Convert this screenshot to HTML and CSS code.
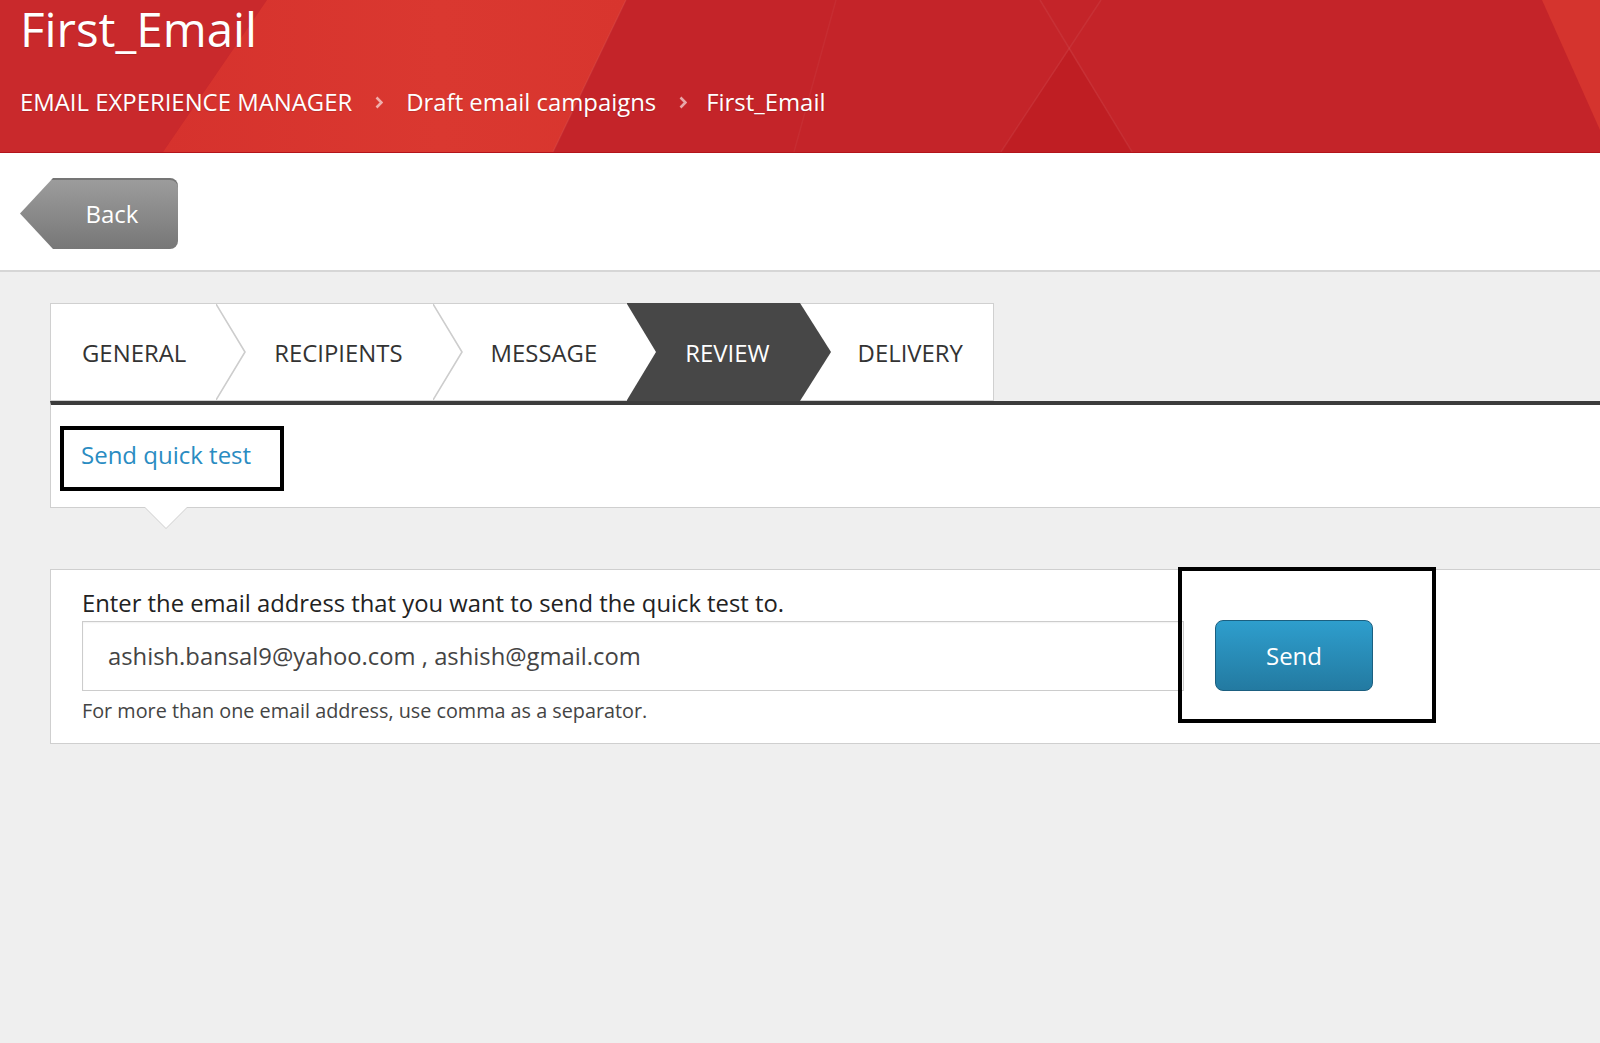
FILE: index.html
```html
<!DOCTYPE html>
<html lang="en">
<head>
  <meta charset="UTF-8" />
  <meta name="viewport" content="width=device-width, initial-scale=1.0"/>
  <title>First_Email</title>
  <link rel="stylesheet" href="styles.css">
</head>
<body>
  <header class="masthead">
    <svg class="masthead-bg" viewBox="0 0 1600 152" preserveAspectRatio="none" aria-hidden="true">
      <defs>
        <linearGradient id="band" x1="0" y1="0" x2="1" y2="0">
          <stop offset="0" stop-color="#d6322d"/>
          <stop offset="0.6" stop-color="#da3830"/>
          <stop offset="1" stop-color="#d8352e"/>
        </linearGradient>
      </defs>
      <rect width="1600" height="152" fill="#c42429"/>
      <polygon points="0,0 267,0 163,152 0,152" fill="#c9292c"/>
      <polygon points="267,0 626,0 553,152 163,152" fill="url(#band)"/>
      <polygon points="1069,50 1001,152 1132,152" fill="#bf1e23"/>
      <polygon points="1542,0 1600,0 1600,130" fill="#d5342e"/>
      <line x1="1040" y1="0" x2="1132" y2="152" stroke="#fff" stroke-opacity=".06" stroke-width="1.5"/>
      <line x1="1101" y1="0" x2="1001" y2="152" stroke="#fff" stroke-opacity=".06" stroke-width="1.5"/>
      <line x1="836" y1="0" x2="794" y2="152" stroke="#fff" stroke-opacity=".04" stroke-width="1.5"/>
      <line x1="626" y1="0" x2="553" y2="152" stroke="#fff" stroke-opacity=".06" stroke-width="1.5"/>
    </svg>
    <h1 class="title">First_Email</h1>
    <nav class="crumbs">
      <span>EMAIL EXPERIENCE MANAGER</span>
      <svg class="crumb-sep" viewBox="0 0 8 13" aria-hidden="true"><polyline points="1.5,1.5 6.5,6.5 1.5,11.5" fill="none" stroke="currentColor" stroke-width="2.6"/></svg>
      <span>Draft email campaigns</span>
      <svg class="crumb-sep" viewBox="0 0 8 13" aria-hidden="true"><polyline points="1.5,1.5 6.5,6.5 1.5,11.5" fill="none" stroke="currentColor" stroke-width="2.6"/></svg>
      <span class="crumb-last">First_Email</span>
    </nav>
  </header>

  <div class="toolbar">
    <button class="back-btn" type="button">Back</button>
  </div>

  <main class="workspace">
    <div class="steps">
      <div class="step">GENERAL
        <svg class="step-edge" viewBox="0 0 30 96" preserveAspectRatio="none" aria-hidden="true">
          <polygon points="0,0 29,48 0,96" fill="#fff"/>
          <polyline points="0,0 29,48 0,96" fill="none" stroke="#cdcdcd" stroke-width="1.6"/>
        </svg>
      </div>
      <div class="step">RECIPIENTS
        <svg class="step-edge" viewBox="0 0 30 96" preserveAspectRatio="none" aria-hidden="true">
          <polygon points="0,0 29,48 0,96" fill="#fff"/>
          <polyline points="0,0 29,48 0,96" fill="none" stroke="#cdcdcd" stroke-width="1.6"/>
        </svg>
      </div>
      <div class="step">MESSAGE
        <svg class="step-edge" viewBox="0 0 30 96" preserveAspectRatio="none" aria-hidden="true">
          <polygon points="0,0 29,48 0,96" fill="#fff"/>
        </svg>
      </div>
      <div class="step is-active">REVIEW
        <svg class="step-edge" viewBox="0 0 32 98" preserveAspectRatio="none" aria-hidden="true">
          <polygon points="0,0 31,49 0,98" fill="#474747"/>
        </svg>
      </div>
      <div class="step">DELIVERY</div>
    </div>

    <section class="panel action-panel">
      <div class="mark">
        <a class="quick-link" href="#">Send quick test</a>
      </div>
    </section>

    <section class="panel test-panel">
      <div class="test-form">
        <label for="recipients">Enter the email address that you want to send the quick test to.</label>
        <input type="text" id="recipients" value="ashish.bansal9@yahoo.com , ashish@gmail.com">
        <p class="hint">For more than one email address, use comma as a separator.</p>
      </div>
      <div class="mark mark-send">
        <button class="send-btn" type="button">Send</button>
      </div>
    </section>
  </main>
</body>
</html>
```

FILE: styles.css
```css
:root {
  --page-bg: #efefef;
  --line: #cfcfcf;
  --text: #333333;
  --link: #2a8cc2;
  --step-dark: #474747;
}

body {
  margin: 0;
  font-family: "Open Sans", "Liberation Sans", sans-serif;
  background-color: var(--page-bg);
  color: var(--text);
}

/* header */
.masthead {
  position: relative;
  height: 152px;
  padding: 0 20px;
  border-bottom: 1px solid #b3141b;
  color: #fff;
  overflow: hidden;
}

.masthead-bg {
  position: absolute;
  top: 0;
  left: 0;
  width: 100%;
  height: 100%;
}

.title,
.crumbs {
  position: relative;
}

.title {
  margin: 0;
  padding-top: 2px;
  font-size: 47.5px;
  font-weight: 400;
  line-height: 54px;
  text-shadow: 0 1px 1px rgba(0, 0, 0, 0.15);
}

.crumbs {
  display: flex;
  align-items: center;
  gap: 23px;
  margin-top: 31px;
  font-size: 23.9px;
  line-height: 30px;
  text-shadow: 0 1px 1px rgba(0, 0, 0, 0.15);
}

.crumb-last {
  margin-left: -4px;
}

.crumb-sep {
  width: 8px;
  height: 13px;
  color: rgba(255, 255, 255, 0.6);
}

/* back bar */
.toolbar {
  height: 92px;
  padding: 25px 20px 0;
  background: #fff;
  border-bottom: 2px solid #d6d6d6;
}

.back-btn {
  width: 158px;
  height: 71px;
  padding: 0 0 0 26px;
  border: none;
  border-radius: 0 8px 8px 0;
  clip-path: polygon(33px 0, 100% 0, 100% 100%, 33px 100%, 0 50%);
  background: linear-gradient(#9d9d9d, #777777);
  box-shadow: inset 0 2px 0 rgba(0, 0, 0, 0.25);
  color: #fff;
  font-family: inherit;
  font-size: 24px;
  cursor: pointer;
}

/* steps */
.workspace {
  padding: 31px 0 0 50px;
}

.steps {
  display: flex;
  width: fit-content;
  height: 96px;
  background: #fff;
  border: 1px solid #d0d0d0;
}

.step {
  position: relative;
  display: flex;
  align-items: center;
  padding: 0 30px 0 58px;
  font-size: 23.9px;
  color: var(--text);
}

.step:first-child {
  padding-left: 31px;
}

.step.is-active {
  margin: -1px 0;
  background: var(--step-dark);
  color: #fff;
}

.step-edge {
  position: absolute;
  top: 0;
  right: -30px;
  width: 30px;
  height: 100%;
  z-index: 1;
}

.step.is-active .step-edge {
  right: -32px;
  width: 32px;
}

/* panels */
.panel {
  background: #fff;
  border: 1px solid var(--line);
  border-right: none;
}

.action-panel {
  position: relative;
  padding: 21px 0 16px 9px;
  border-top: 4px solid #3c3c3c;
}

/* little pointer under the panel */
.action-panel::before,
.action-panel::after {
  content: "";
  position: absolute;
  left: 94px;
  top: 100%;
  border: 21px solid transparent;
  border-bottom: none;
}

.action-panel::before {
  border-top-color: var(--line);
  margin-top: 1px;
}

.action-panel::after {
  border-top-color: #fff;
}

.mark {
  box-sizing: border-box;
  border: 4px solid #000;
}

.action-panel .mark {
  display: flex;
  align-items: center;
  width: 224px;
  height: 65px;
  padding: 0 0 8px 17px;
}

.quick-link {
  color: var(--link);
  font-size: 24px;
  text-decoration: none;
}

.test-panel {
  display: flex;
  align-items: flex-start;
  margin-top: 61px;
  padding-left: 31px;
}

.test-form {
  width: 1102px;
  padding: 18px 0 19px;
}

.test-form label {
  display: block;
  font-size: 23.8px;
  line-height: 30px;
  color: #222;
}

.test-form input {
  display: block;
  width: 100%;
  height: 70px;
  margin-top: 3px;
  padding: 0 25px;
  box-sizing: border-box;
  border: 1px solid #cccccc;
  box-shadow: inset 0 1px 2px rgba(0, 0, 0, 0.06);
  font-family: inherit;
  font-size: 23.8px;
  color: #444;
}

.hint {
  margin: 7px 0 0;
  font-size: 19.8px;
  line-height: 26px;
  color: #444;
}

.mark-send {
  position: relative;
  width: 258px;
  height: 156px;
  margin: -3px 0 0 -6px;
  padding: 49px 0 0 33px;
}

.send-btn {
  width: 158px;
  height: 71px;
  border: 1px solid #1b5f80;
  border-radius: 8px;
  background: linear-gradient(#2e9ecd, #237aa1);
  color: #fff;
  font-family: inherit;
  font-size: 24px;
  cursor: pointer;
}
```
